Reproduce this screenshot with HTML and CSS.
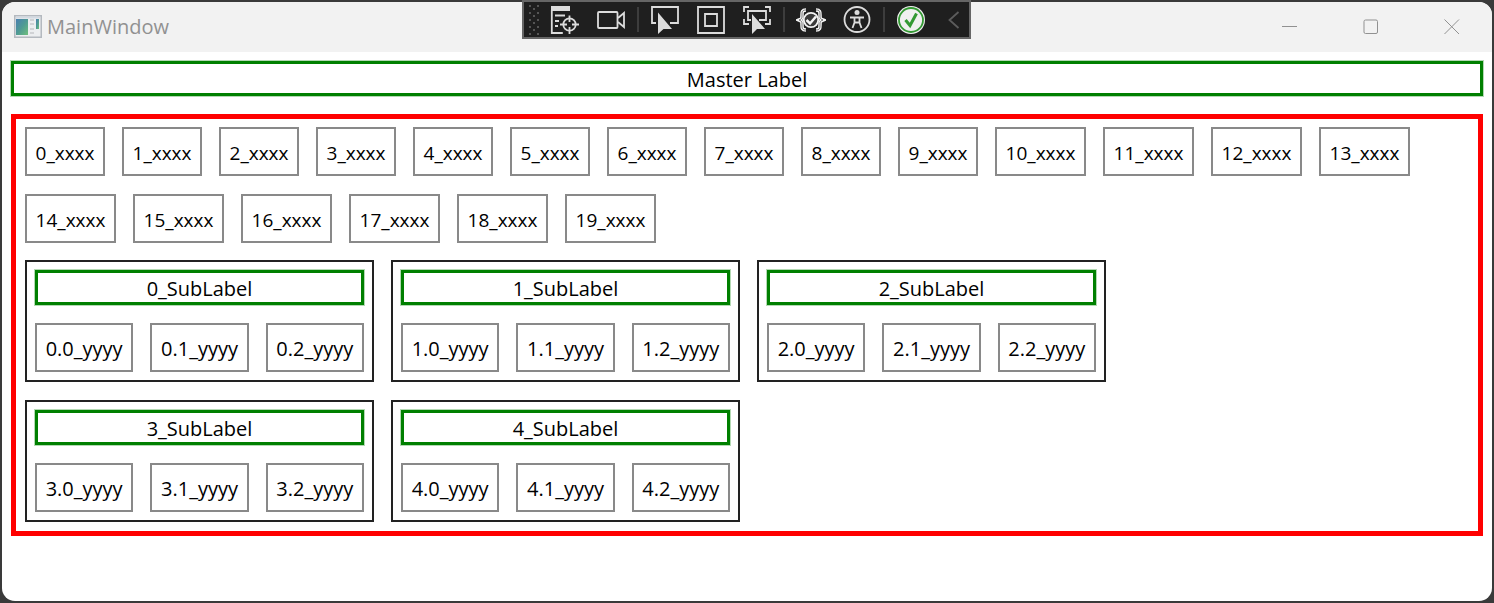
FILE: index.html
```html
<!DOCTYPE html>
<html lang="en">
<head>
<meta charset="utf-8">
<title>MainWindow</title>
<link rel="stylesheet" href="styles.css">
</head>
<body>
<div class="window">
  <header class="titlebar">
    <svg class="app-icon" width="28" height="24" viewBox="0 0 28 24" aria-hidden="true">
      <defs>
        <linearGradient id="pane" x1="0" y1="0" x2="1" y2="1"><stop offset="0" stop-color="#4a7fb0"/><stop offset=".5" stop-color="#4f9a94"/><stop offset="1" stop-color="#6fbf7c"/></linearGradient>
      </defs>
      <rect x=".75" y=".75" width="26.500" height="21.500" fill="#eceef0" stroke="#b4b9bf" stroke-width="1.500"/>
      <path d="M2 2.500h24" stroke="#d3dae2" stroke-width="2"/>
      <rect x="2" y="4" width="12" height="16" fill="url(#pane)"/>
      <path d="M16 5h4M16 9h4M16 14h4M16 18h4" stroke="#d0d2d5" stroke-width="2"/>
      <rect x="22" y="4" width="3" height="10" fill="url(#pane)"/>
    </svg>
    <h1 class="title">MainWindow</h1>
    <div class="caption-buttons">
      <button class="caption" aria-label="Minimize"><svg width="16" height="16" viewBox="0 0 16 16"><path d="M0 7.500h15"/></svg></button>
      <button class="caption" aria-label="Maximize"><svg width="16" height="16" viewBox="0 0 16 16"><rect x="1" y="1" width="13.500" height="13.500" rx="1.500"/></svg></button>
      <button class="caption" aria-label="Close"><svg width="16" height="16" viewBox="0 0 16 16"><path d="M.5 .5l14.500 14.500M15 .5l-14.500 14.500"/></svg></button>
    </div>
  </header>

  <div class="debug-bar" role="toolbar" aria-label="Debug toolbar">
    <svg class="grip" width="10" height="32" viewBox="0 0 10 32" aria-hidden="true"><path d="M1 1v30M9 1v30" stroke-dasharray="2 5"/><path d="M5 4v27" stroke-dasharray="2 5"/></svg>
    <button class="tool" aria-label="Go to live visual tree"><svg width="30" height="30" viewBox="0 0 30 30"><path d="M1 1h19v5H1z" fill="#dcdcdc" stroke="none"/><path d="M1.800 5v23h11M5 10.500h10M5 16h4M5 21h3"/><circle cx="19.500" cy="19.500" r="6.200"/><path d="M19.500 10.500v6.500M19.500 22v7M10 19.500h7M22 19.500h7"/></svg></button>
    <button class="tool" aria-label="Show in XAML live preview"><svg width="30" height="30" viewBox="0 0 30 30"><rect x="2" y="7" width="19.500" height="16" rx="1"/><path d="M22 13l6-5v14l-6-5"/></svg></button>
    <span class="divider"></span>
    <button class="tool" aria-label="Select element"><svg width="30" height="30" viewBox="0 0 30 30"><path d="M6 18H2V2h26v16h-8"/><path d="M8 7.500v21.500l5.500-5H22z" class="solid"/></svg></button>
    <button class="tool" aria-label="Display layout adorners"><svg width="30" height="30" viewBox="0 0 30 30"><path d="M2 2h26v26H2zM9 9h12v12H9z"/></svg></button>
    <button class="tool" aria-label="Track focused element"><svg width="30" height="30" viewBox="0 0 30 30"><path d="M7 2H2v5M23 2h5v5M2 14v5h5M28 14v5h-5M9 15H6V6h18v9h-7"/><path d="M10 9v20l5-5h8z" class="solid"/></svg></button>
    <span class="divider"></span>
    <button class="tool" aria-label="Show binding failures"><svg width="30" height="30" viewBox="0 0 30 30"><path d="M10 5C6 5 6 7 6 10s0 4-3 5c3 1 3 2 3 5s0 5 4 5M20 5c4 0 4 2 4 5s0 4 3 5c-3 1-3 2-3 5s0 5-4 5" stroke="#f4f4f4" stroke-width="3.500"/><path d="M10 5C6 5 6 7 6 10s0 4-3 5c3 1 3 2 3 5s0 5 4 5M20 5c4 0 4 2 4 5s0 4 3 5c-3 1-3 2-3 5s0 5-4 5" stroke="#555" stroke-width=".8"/><circle cx="15" cy="15" r="7.200" fill="#3a3a3a" stroke="#f4f4f4"/><path d="M10.500 15l3.500 3.500 6-7" stroke="#f4f4f4" stroke-width="2.500"/></svg></button>
    <button class="tool" aria-label="Scan for accessibility issues"><svg width="30" height="30" viewBox="0 0 30 30"><circle cx="15" cy="14.500" r="12.500"/><circle cx="15" cy="7.500" r="2.500" class="solid"/><path d="M8 12.500h14M12.500 12.500v5l-2 5.500M17.500 12.500v5l2 5.500M12.500 17.500h5"/></svg></button>
    <span class="divider"></span>
    <button class="tool" aria-label="Hot Reload"><svg width="30" height="30" viewBox="0 0 30 30"><circle cx="15" cy="15" r="14" fill="#f0f0f0" stroke="none"/><circle cx="15" cy="15" r="12" stroke="#339933"/><path d="M9.500 15l4.500 5.500 6.500-12" stroke="#339933" stroke-width="3"/></svg></button>
    <button class="tool collapse" aria-label="Collapse toolbar"><svg width="12" height="18" viewBox="0 0 12 18"><path d="M10.500 1l-9 8 9 8"/></svg></button>
  </div>

  <main class="content">
    <div class="label">Master Label</div>
    <section class="panel">
      <div class="items">
        <div class="item">0_xxxx</div><div class="item">1_xxxx</div><div class="item">2_xxxx</div><div class="item">3_xxxx</div><div class="item">4_xxxx</div><div class="item">5_xxxx</div><div class="item">6_xxxx</div><div class="item">7_xxxx</div><div class="item">8_xxxx</div><div class="item">9_xxxx</div>
        <div class="item wide">10_xxxx</div><div class="item wide">11_xxxx</div><div class="item wide">12_xxxx</div><div class="item wide">13_xxxx</div><div class="item wide">14_xxxx</div><div class="item wide">15_xxxx</div><div class="item wide">16_xxxx</div><div class="item wide">17_xxxx</div><div class="item wide">18_xxxx</div><div class="item wide">19_xxxx</div>
      </div>
      <div class="groups">
        <div class="group"><div class="label">0_SubLabel</div><div class="row"><div class="item">0.0_yyyy</div><div class="item">0.1_yyyy</div><div class="item">0.2_yyyy</div></div></div>
        <div class="group"><div class="label">1_SubLabel</div><div class="row"><div class="item">1.0_yyyy</div><div class="item">1.1_yyyy</div><div class="item">1.2_yyyy</div></div></div>
        <div class="group"><div class="label">2_SubLabel</div><div class="row"><div class="item">2.0_yyyy</div><div class="item">2.1_yyyy</div><div class="item">2.2_yyyy</div></div></div>
        <div class="group"><div class="label">3_SubLabel</div><div class="row"><div class="item">3.0_yyyy</div><div class="item">3.1_yyyy</div><div class="item">3.2_yyyy</div></div></div>
        <div class="group"><div class="label">4_SubLabel</div><div class="row"><div class="item">4.0_yyyy</div><div class="item">4.1_yyyy</div><div class="item">4.2_yyyy</div></div></div>
      </div>
    </section>
  </main>
</div>
</body>
</html>
```
FILE: styles.css
```css
* { box-sizing: border-box; }

body {
  margin: 0;
  padding: 2px;
  min-height: 100vh;
  display: flex;
  background: #3a3a3a;
  color: #000;
  font-family: "Segoe UI", "Open Sans", "Noto Sans", sans-serif;
  font-size: 20px;
  line-height: 28px;
}

.window {
  flex: 1;
  background: #fff;
  border-radius: 13px;
  overflow: hidden;
}

.titlebar {
  display: flex;
  align-items: center;
  height: 50px;
  padding-left: 12px;
  background: #f2f2f2;
}

.title {
  margin: 0 0 0 5px;
  color: #919191;
  font-size: 20px;
  font-weight: 400;
  line-height: 28px;
}

.caption-buttons { display: flex; margin-left: auto; }

.caption, .tool {
  display: flex;
  flex-shrink: 0;
  align-items: center;
  justify-content: center;
  padding: 0;
  border: 0;
  background: none;
}

.caption { width: 81px; height: 50px; }

.caption svg { fill: none; stroke: #919191; stroke-width: 1; }

.debug-bar {
  position: absolute;
  top: 0;
  left: 522px;
  display: flex;
  align-items: center;
  width: 449px;
  height: 39px;
  padding-left: 5px;
  border: 2px solid #666;
  background: #1f1f1f;
}

.grip { flex-shrink: 0; margin-right: 3px; stroke: #555; stroke-width: 2; }

.tool { width: 46px; height: 35px; }

.tool svg { fill: none; stroke: #dcdcdc; stroke-width: 1.8; }

.tool .solid { fill: #dcdcdc; stroke: none; }

.divider { flex-shrink: 0; width: 2px; height: 25px; margin: 0 3px; background: #3d3d3d; }

.tool.collapse { width: 40px; }

.tool.collapse svg { stroke: #5c5c5c; }

.content {
  display: flex;
  flex-direction: column;
  gap: 18px;
  padding: 9px;
}

.label {
  height: 35px;
  border: 3px solid #008000;
  box-shadow: 0 0 0 1px #b3d9b3;
  text-align: center;
  line-height: 32px;
}

.panel {
  display: flex;
  flex-direction: column;
  gap: 17px;
  padding: 8px 9px 9px;
  border: 5px solid #f00;
}

.items { display: flex; flex-wrap: wrap; gap: 18px 17px; }

.item {
  width: 80px;
  height: 49px;
  border: 2px solid #898989;
  text-align: center;
  line-height: 48px;
  font-size: 19px;
}

.item.wide { width: 91px; }

.groups { display: flex; flex-wrap: wrap; gap: 18px 17px; }

.group {
  display: flex;
  flex-direction: column;
  gap: 18px;
  width: 349px;
  padding: 8px;
  border: 2px solid #222;
}

.row { display: flex; gap: 17px; }

.row .item { flex: 1; font-size: 20px; }
```
